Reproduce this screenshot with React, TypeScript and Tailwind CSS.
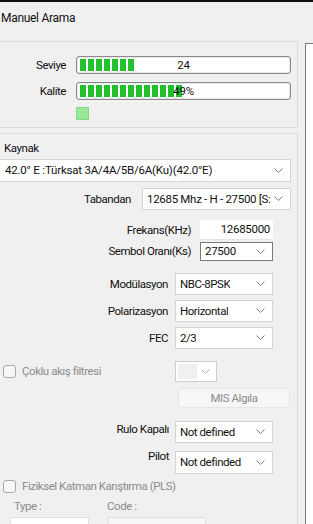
import React from "react";

const font = { fontFamily: "Roboto, 'Liberation Sans', sans-serif" };

const Chevron = ({ color = "#808080" }: { color?: string }) => (
  <svg width="9" height="6" viewBox="0 0 9 6" className="shrink-0">
    <path d="M0.5 0.5 L4.5 4.5 L8.5 0.5" fill="none" stroke={color} strokeWidth="1" />
  </svg>
);

const Select = ({
  text,
  className,
  focused = false,
}: {
  text: string;
  className: string;
  focused?: boolean;
}) => (
  <div
    className={`flex items-center justify-between bg-white border pl-[4px] pr-[7px] ${
      focused ? "border-[#7a7a7a]" : "border-[#d4d4d4]"
    } ${className}`}
  >
    <span className="whitespace-nowrap overflow-hidden text-[#111]">{text}</span>
    <Chevron />
  </div>
);

const Bar = ({ blocks, label }: { blocks: number; label: string }) => (
  <div className="relative w-[215px] h-[18px] rounded-[3px] border border-[#8a8a8a] bg-white flex items-center gap-[2px] px-[3px] shadow-[inset_0_0_0_1px_#e8e8e8]">
    {Array.from({ length: blocks }).map((_, i) => (
      <div key={i} className="w-[6px] h-[12px] bg-[#22c02a]" />
    ))}
    <span className="absolute inset-0 flex items-center justify-center text-[#111] tracking-[-0.2px]">
      {label}
    </span>
  </div>
);

const FormRow = ({
  label,
  labelW,
  gap,
  children,
  className = "",
}: {
  label: string;
  labelW: string;
  gap: string;
  children: React.ReactNode;
  className?: string;
}) => (
  <div className={`flex items-center ${className}`}>
    <div className={`${labelW} text-right text-[#111] whitespace-nowrap`}>{label}</div>
    <div className={gap} />
    {children}
  </div>
);

const CheckBox = () => (
  <div className="w-[13px] h-[13px] rounded-[3px] border border-[#a8a8a8] bg-[#f7f7f7]" />
);

export default function App() {
  return (
    <div
      className="w-[313px] h-[524px] overflow-hidden bg-[#f0f0f0] text-[11.5px] leading-[15px] tracking-[-0.45px]"
      style={font}
    >
      <div className="h-[2px] bg-[#111]" />
      <div className="h-[39px] pt-[9px] pl-[1px] text-[12px] tracking-[-0.3px] text-[#111]">Manuel Arama</div>
      <div className="flex items-start">
        <div className="-ml-px w-[299px] flex flex-col">
          {/* signal group */}
          <div className="border border-[#dcdcdc] h-[87px] pt-[14px]">
            <div className="flex items-center">
              <div className="w-[66px] text-right text-[#111]">Seviye</div>
              <div className="w-[10px]" />
              <Bar blocks={7} label="24" />
            </div>
            <div className="flex items-center mt-[8px]">
              <div className="w-[66px] text-right text-[#111]">Kalite</div>
              <div className="w-[10px]" />
              <Bar blocks={13} label="49%" />
            </div>
            <div className="ml-[76px] mt-[7px] w-[13px] h-[13px] bg-[#97e897] border border-[#86d886]" />
          </div>

          {/* tuning group */}
          <div className="mt-[5px] border border-[#dcdcdc] h-[400px]">
            <div className="mt-[7px] ml-[4px] text-[#111]">Kaynak</div>
            <Select
              text="42.0° E :Türksat 3A/4A/5B/6A(Ku)(42.0°E)"
              className="-ml-[3px] mt-[3px] w-[294px] h-[23px] pl-[7px] tracking-[-0.2px]"
            />
            <FormRow label="Tabandan" labelW="w-[131px]" gap="w-[11px]" className="mt-[6px]">
              <Select text="12685 Mhz - H - 27500 [S:" className="w-[149px] h-[22px] tracking-[-0.3px]" />
            </FormRow>
            <FormRow label="Frekans(KHz)" labelW="w-[191px]" gap="w-[9px]" className="mt-[10px]">
              <div className="w-[73px] h-[20px] bg-white border-b border-[#e4e4e4] text-right pr-[3px] leading-[19px] tracking-[-0.3px] text-[#111]">
                12685000
              </div>
            </FormRow>
            <FormRow label="Sembol Oranı(Ks)" labelW="w-[191px]" gap="w-[9px]" className="mt-[2px]">
              <Select text="27500" focused className="w-[73px] h-[19px] pl-[2px] tracking-[-0.3px]" />
            </FormRow>
            <FormRow label="Modülasyon" labelW="w-[168px]" gap="w-[7px]" className="mt-[12px]">
              <Select text="NBC-8PSK" className="w-[98px] h-[22px]" />
            </FormRow>
            <FormRow label="Polarizasyon" labelW="w-[168px]" gap="w-[7px]" className="mt-[5px]">
              <Select text="Horizontal" className="w-[98px] h-[22px]" />
            </FormRow>
            <FormRow label="FEC" labelW="w-[168px]" gap="w-[7px]" className="mt-[5px]">
              <Select text="2/3" className="w-[98px] h-[22px]" />
            </FormRow>

            <div className="flex items-center mt-[12px] h-[21px]">
              <div className="ml-[3px]">
                <CheckBox />
              </div>
              <span className="ml-[6px] text-[#8c8c8c]">Çoklu akış filtresi</span>
              <div className="ml-auto mr-[80px] w-[42px] h-[21px] border border-[#cdcdcd] bg-white flex items-center pl-[2px] pr-[6px] justify-between">
                <div className="w-[19px] h-[15px] bg-[#f0f0f0]" />
                <Chevron color="#b0b0b0" />
              </div>
            </div>
            <div className="ml-[178px] mt-[6px] w-[112px] h-[20px] rounded-[3px] border border-[#e6e6e6] bg-[#f6f6f6] flex items-center justify-center text-[#8c8c8c]">
              MIS Algıla
            </div>

            <div className="flex items-start mt-[13px]">
              <div className="w-[169px] text-right text-[#111] mt-[1px]">Rulo Kapalı</div>
              <div className="w-[6px]" />
              <Select text="Not defined" className="w-[98px] h-[22px]" />
            </div>
            <div className="flex items-start mt-[9px]">
              <div className="w-[169px] text-right text-[#111] mt-[-3px]">Pilot</div>
              <div className="w-[6px]" />
              <Select text="Not definded" className="w-[98px] h-[23px] mt-[-1px]" />
            </div>

            <div className="flex items-center mt-[5px] h-[15px]">
              <div className="ml-[3px]">
                <CheckBox />
              </div>
              <span className="ml-[6px] text-[#8c8c8c]">Fiziksel Katman Karıştırma (PLS)</span>
            </div>
            <div className="flex mt-[5px] text-[#8c8c8c]">
              <span className="ml-[14px] w-[93px]">Type :</span>
              <span>Code :</span>
            </div>
            <div className="flex mt-[3px]">
              <div className="ml-[10px] w-[79px] h-[22px] bg-white border border-[#e0e0e0] flex items-center justify-between pl-[8px] pr-[7px] text-[#111]">
                <span>Root</span>
                <Chevron color="#b0b0b0" />
              </div>
              <div className="ml-[19px] w-[98px] h-[22px] bg-[#f6f6f6] border border-[#e0e0e0]" />
            </div>
          </div>
        </div>
        <div className="ml-[7px] mt-[2px] flex-1 h-[481px] bg-white border-l border-t border-[#7a7a7a]" />
      </div>
    </div>
  );
}
